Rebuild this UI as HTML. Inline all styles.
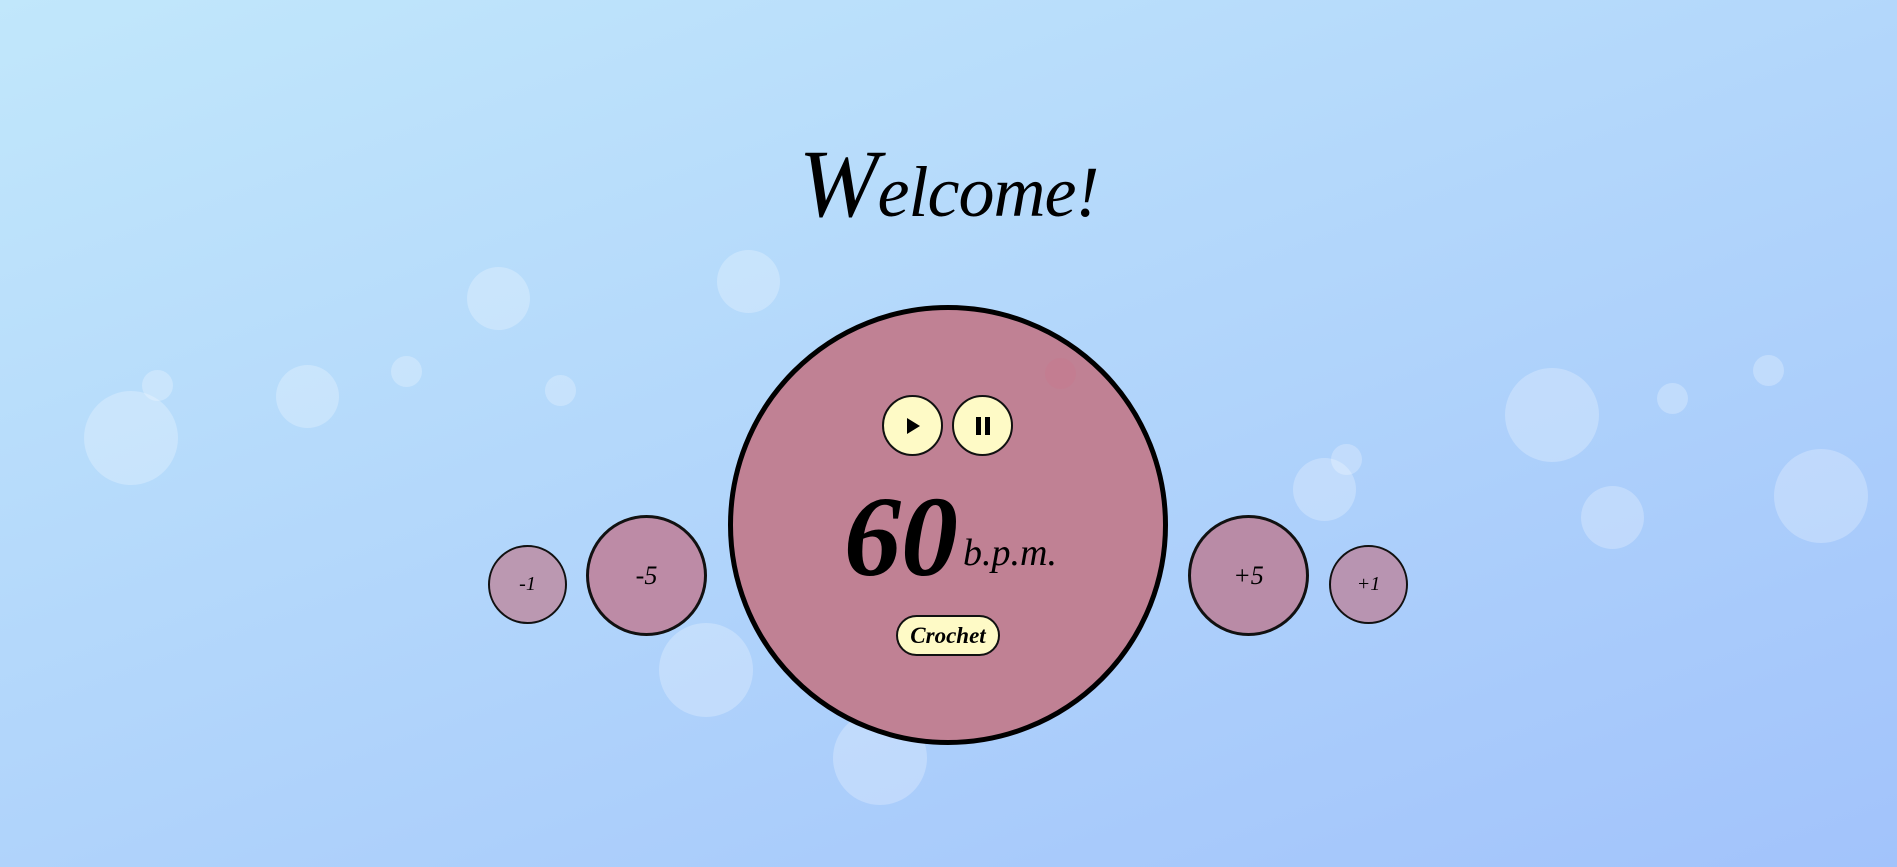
<!DOCTYPE html>
<html><head><style>
html,body{margin:0;padding:0;width:1897px;height:867px;overflow:hidden}
body{position:relative;background:linear-gradient(160deg,#c1e7fb 0%,#b3d7fb 45%,#a2c3fb 100%);font-family:"Liberation Serif",serif}
.b{position:absolute;border-radius:50%;background:rgba(255,255,255,0.25)}
.c{position:absolute;border-radius:50%;box-sizing:border-box;border:2px solid #111;display:flex;align-items:center;justify-content:center;font-style:italic}
h1{position:absolute;left:0;width:1897px;top:128px;margin:0;text-align:center;font-family:"Liberation Serif",serif;font-style:italic;font-weight:normal;font-size:72px;color:#000;letter-spacing:-1px}
h1 span{font-size:96px}
</style></head><body>
<div class="b" style="left:84px;top:391px;width:94px;height:94px"></div>
<div class="b" style="left:142px;top:370px;width:31px;height:31px"></div>
<div class="b" style="left:276px;top:365px;width:63px;height:63px"></div>
<div class="b" style="left:391px;top:356px;width:31px;height:31px"></div>
<div class="b" style="left:467px;top:267px;width:63px;height:63px"></div>
<div class="b" style="left:545px;top:375px;width:31px;height:31px"></div>
<div class="b" style="left:717px;top:250px;width:63px;height:63px"></div>
<div class="b" style="left:659px;top:623px;width:94px;height:94px"></div>
<div class="b" style="left:833px;top:711px;width:94px;height:94px"></div>
<div class="b" style="left:1293px;top:458px;width:63px;height:63px"></div>
<div class="b" style="left:1331px;top:444px;width:31px;height:31px"></div>
<div class="b" style="left:1505px;top:368px;width:94px;height:94px"></div>
<div class="b" style="left:1581px;top:486px;width:63px;height:63px"></div>
<div class="b" style="left:1657px;top:383px;width:31px;height:31px"></div>
<div class="b" style="left:1753px;top:355px;width:31px;height:31px"></div>
<div class="b" style="left:1774px;top:449px;width:94px;height:94px"></div>

<h1><span>W</span>elcome!</h1>

<div class="c" style="left:728px;top:305px;width:440px;height:440px;border:5px solid #000;background:rgba(192,126,145,0.97)"></div>
<div class="b" style="left:1045px;top:358px;width:31px;height:31px;background:rgba(200,120,140,0.4)"></div>

<div class="c" style="left:882px;top:395px;width:61px;height:61px;background:#fefac6">
<svg width="16" height="18" viewBox="0 0 16 18"><path d="M2 1 L15 9 L2 17Z" fill="#000"/></svg></div>
<div class="c" style="left:952px;top:395px;width:61px;height:61px;background:#fefac6">
<svg width="16" height="18" viewBox="0 0 16 18"><rect x="1" y="0" width="5" height="18" fill="#000"/><rect x="10" y="0" width="5" height="18" fill="#000"/></svg></div>

<div style="position:absolute;left:844px;top:478px;font-style:italic;font-weight:bold;font-size:114px;line-height:118px;color:#000">60</div>
<div style="position:absolute;left:963px;top:533px;font-style:italic;font-size:38px;line-height:40px;color:#000">b.p.m.</div>

<div class="c" style="left:896px;top:615px;width:104px;height:41px;border-radius:21px;background:#fefac6;font-size:23px;font-weight:bold">Crochet</div>

<div class="c" style="left:488px;top:545px;width:79px;height:79px;background:#bb98b1;font-size:20px">-1</div>
<div class="c" style="left:586px;top:515px;width:121px;height:121px;border-width:3px;background:#bd8ba6;font-size:26px">-5</div>
<div class="c" style="left:1188px;top:515px;width:121px;height:121px;border-width:3px;background:#b98ba6;font-size:26px">+5</div>
<div class="c" style="left:1329px;top:545px;width:79px;height:79px;background:#b894b1;font-size:20px">+1</div>
</body></html>
